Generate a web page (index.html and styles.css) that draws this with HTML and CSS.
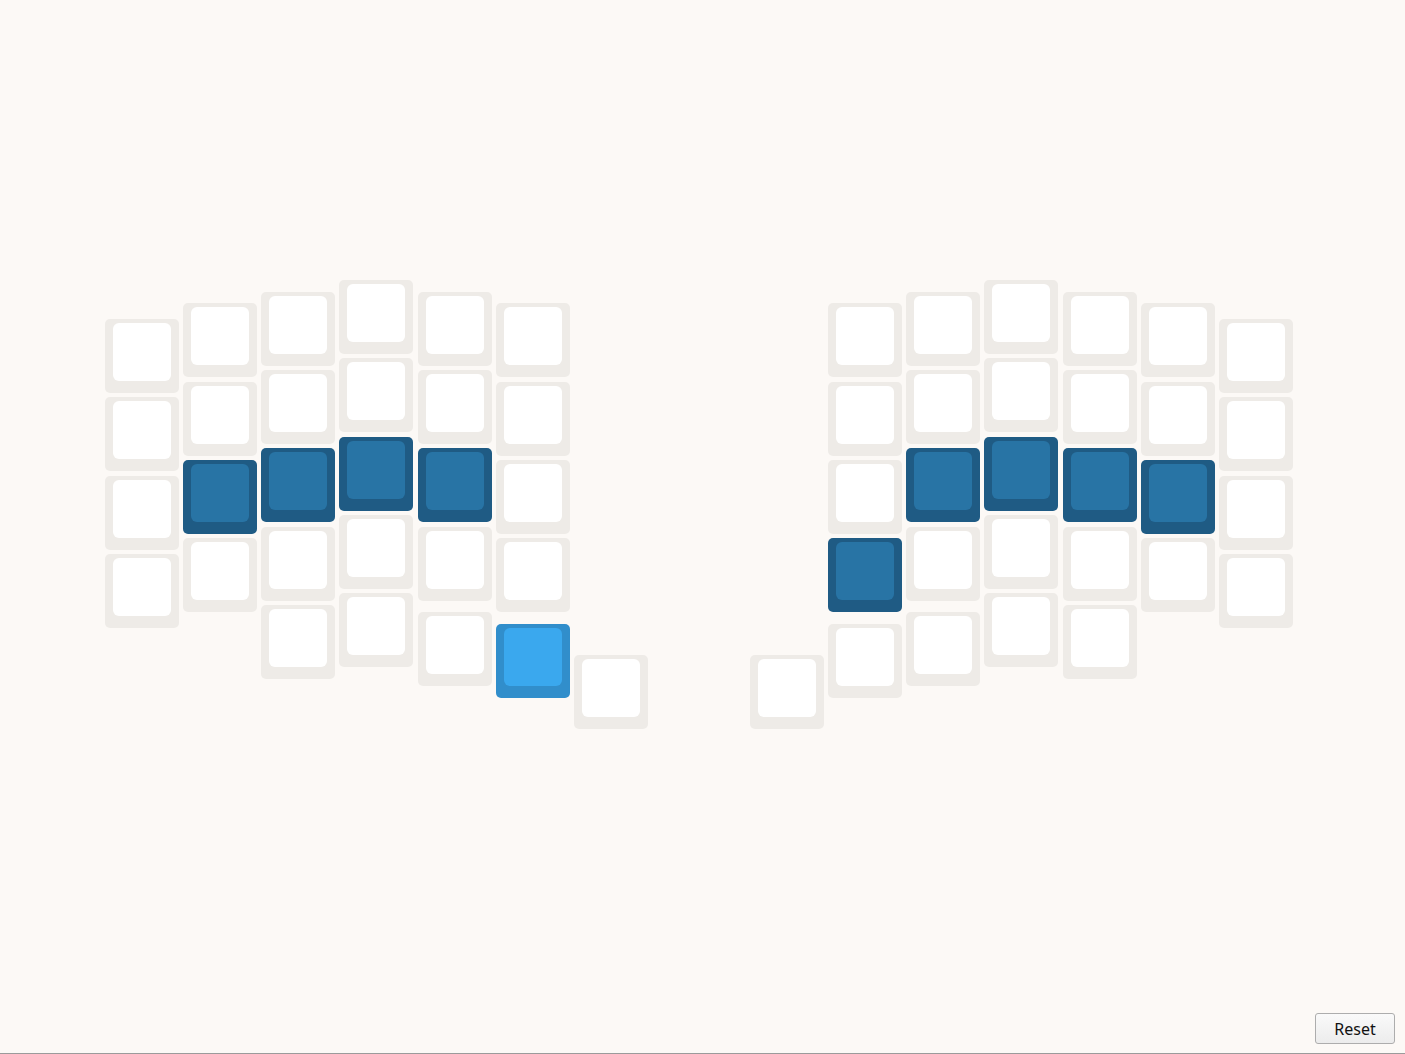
FILE: index.html
```html
<!DOCTYPE html>
<html lang="en">
<head>
<meta charset="utf-8">
<title>Keyboard</title>
<link rel="stylesheet" href="styles.css">
</head>
<body>
<main class="stage">
  <div class="keyboard">
    <div class="half">
      <div class="col s39">
        <div class="key"><span></span></div>
        <div class="key"><span></span></div>
        <div class="key"><span></span></div>
        <div class="key"><span></span></div>
      </div>
      <div class="col s23">
        <div class="key"><span></span></div>
        <div class="key"><span></span></div>
        <div class="key on"><span></span></div>
        <div class="key"><span></span></div>
      </div>
      <div class="col s12">
        <div class="key"><span></span></div>
        <div class="key"><span></span></div>
        <div class="key on"><span></span></div>
        <div class="key"><span></span></div>
        <div class="key"><span></span></div>
      </div>
      <div class="col s0">
        <div class="key"><span></span></div>
        <div class="key"><span></span></div>
        <div class="key on"><span></span></div>
        <div class="key"><span></span></div>
        <div class="key"><span></span></div>
      </div>
      <div class="col s12">
        <div class="key"><span></span></div>
        <div class="key"><span></span></div>
        <div class="key on"><span></span></div>
        <div class="key"><span></span></div>
        <div class="key drop7"><span></span></div>
      </div>
      <div class="col s23">
        <div class="key"><span></span></div>
        <div class="key"><span></span></div>
        <div class="key"><span></span></div>
        <div class="key"><span></span></div>
        <div class="key hot drop8"><span></span></div>
      </div>
      <div class="col thumb">
        <div class="key"><span></span></div>
      </div>
    </div>

    <div class="half">
      <div class="col thumb">
        <div class="key"><span></span></div>
      </div>
      <div class="col s23">
        <div class="key"><span></span></div>
        <div class="key"><span></span></div>
        <div class="key"><span></span></div>
        <div class="key on"><span></span></div>
        <div class="key drop8"><span></span></div>
      </div>
      <div class="col s12">
        <div class="key"><span></span></div>
        <div class="key"><span></span></div>
        <div class="key on"><span></span></div>
        <div class="key"><span></span></div>
        <div class="key drop7"><span></span></div>
      </div>
      <div class="col s0">
        <div class="key"><span></span></div>
        <div class="key"><span></span></div>
        <div class="key on"><span></span></div>
        <div class="key"><span></span></div>
        <div class="key"><span></span></div>
      </div>
      <div class="col s12">
        <div class="key"><span></span></div>
        <div class="key"><span></span></div>
        <div class="key on"><span></span></div>
        <div class="key"><span></span></div>
        <div class="key"><span></span></div>
      </div>
      <div class="col s23">
        <div class="key"><span></span></div>
        <div class="key"><span></span></div>
        <div class="key on"><span></span></div>
        <div class="key"><span></span></div>
      </div>
      <div class="col s39">
        <div class="key"><span></span></div>
        <div class="key"><span></span></div>
        <div class="key"><span></span></div>
        <div class="key"><span></span></div>
      </div>
    </div>
  </div>
</main>
<footer class="footer">
  <button class="reset" type="button">Reset</button>
</footer>
</body>
</html>
```

FILE: styles.css
```css
html, body {
  margin: 0;
  padding: 0;
}

body {
  background: #fcf9f6;
  height: 100vh;
  box-sizing: border-box;
  border-bottom: 1px solid #9b9b9b;
  display: flex;
  flex-direction: column;
  font-family: "Noto Sans", "Open Sans", sans-serif;
}

.stage {
  flex: 1;
  padding-top: 280px;
  padding-left: 105px;
}

.keyboard {
  display: flex;
  align-items: flex-start;
  gap: 102px;
}

.half {
  display: flex;
  align-items: flex-start;
  gap: 4.17px;
}

.col {
  display: flex;
  flex-direction: column;
  gap: 4.33px;
}

.s0 { margin-top: 0; }
.s12 { margin-top: 11.75px; }
.s23 { margin-top: 23.25px; }
.s39 { margin-top: 39.17px; }
.thumb { margin-top: 375px; }

.drop7 { margin-top: 6.67px; }
.drop8 { margin-top: 7.67px; }

.key {
  width: 74px;
  height: 74px;
  box-sizing: border-box;
  padding: 4px 8px 12px 8px;
  border-radius: 5px;
  background: #eeebe7;
}

.key span {
  display: block;
  width: 58px;
  height: 58px;
  border-radius: 6px;
  background: #ffffff;
}

.key.on {
  background: #1f5b84;
}

.key.on span {
  background: #2874a5;
}

.key.hot {
  background: #318ecb;
}

.key.hot span {
  background: #3aa8ee;
}

.footer {
  display: flex;
  justify-content: flex-end;
  padding: 0 10px 9px 0;
}

.reset {
  width: 80px;
  height: 31px;
  font-family: "Noto Sans", "Open Sans", sans-serif;
  font-size: 16px;
  color: #111;
  background: linear-gradient(#fafafa, #ececec);
  border: 1px solid #adadad;
  border-radius: 3px;
  padding: 0;
}
```
